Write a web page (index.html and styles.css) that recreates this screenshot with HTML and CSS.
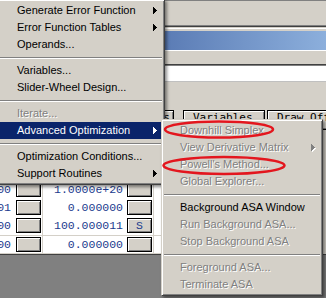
FILE: index.html
```html
<!DOCTYPE html>
<html lang="en">
<head>
    <meta charset="UTF-8">
    <meta name="viewport" content="width=device-width, initial-scale=1.0">
    <title>Advanced Optimization</title>
    <link rel="stylesheet" href="styles.css">
</head>
<body>
<div class="screen">
    <div class="desk">
        <div class="top"></div>
        <div class="edge"></div>
        <div class="rim"></div>
        <div class="caption"></div>
        <div class="menubar"></div>
        <div class="field"></div>
        <div class="gap"></div>
        <div class="tabs">
            <span class="tab cut">Plots</span>
            <span class="tab var">Variables</span>
            <span class="tab draw">Draw Offsets</span>
        </div>
        <div class="spacer"></div>
        <div class="grid">
            <div class="row"><span class="lead">00</span><span class="cbtn"></span><span class="val">1.0000e+20</span><span class="cbtn"></span><span class="tail"></span></div>
            <div class="row"><span class="lead">01</span><span class="cbtn"></span><span class="val">0.000000</span><span class="cbtn"></span><span class="tail"></span></div>
            <div class="row"><span class="lead">00</span><span class="cbtn"></span><span class="val">100.000011</span><span class="cbtn">S</span><span class="tail"></span></div>
            <div class="row ruled"><span class="lead">00</span><span class="cbtn"></span><span class="val">0.000000</span><span class="cbtn"></span><span class="tail"></span></div>
        </div>
        <div class="workspace"></div>
    </div>

    <div class="menu main">
        <div class="item">Generate Error Function<svg class="arrow" width="4" height="7"><path d="M0 0h1v7H0zM1 1h1v5H1zM2 2h1v3H2zM3 3h1v1H3z"/></svg></div>
        <div class="item">Error Function Tables<svg class="arrow" width="4" height="7"><path d="M0 0h1v7H0zM1 1h1v5H1zM2 2h1v3H2zM3 3h1v1H3z"/></svg></div>
        <div class="item">Operands...</div>
        <div class="sep"></div>
        <div class="item">Variables...</div>
        <div class="item">Slider-Wheel Design...</div>
        <div class="sep"></div>
        <div class="item off">Iterate...</div>
        <div class="item on">Advanced Optimization<svg class="arrow" width="4" height="7"><path d="M0 0h1v7H0zM1 1h1v5H1zM2 2h1v3H2zM3 3h1v1H3z"/></svg></div>
        <div class="sep"></div>
        <div class="item">Optimization Conditions...</div>
        <div class="item">Support Routines<svg class="arrow" width="4" height="7"><path d="M0 0h1v7H0zM1 1h1v5H1zM2 2h1v3H2zM3 3h1v1H3z"/></svg></div>
    </div>

    <div class="menu sub">
        <div class="item off">Downhill Simplex</div>
        <div class="item off">View Derivative Matrix<svg class="arrow dim" width="5" height="8"><path class="lit" d="M1 1h1v7H1zM2 2h1v5H2zM3 3h1v3H3zM4 4h1v1H4z"/><path d="M0 0h1v7H0zM1 1h1v5H1zM2 2h1v3H2zM3 3h1v1H3z"/></svg></div>
        <div class="item off">Powell's Method...</div>
        <div class="item off">Global Explorer...</div>
        <div class="sep"></div>
        <div class="item">Background ASA Window</div>
        <div class="item off">Run Background ASA...</div>
        <div class="item off">Stop Background ASA</div>
        <div class="sep"></div>
        <div class="item off">Foreground ASA...</div>
        <div class="item off">Terminate ASA</div>
    </div>

    <svg class="marks" width="326" height="298">
        <ellipse cx="219" cy="129.5" rx="54" ry="8" />
        <ellipse cx="224" cy="165.5" rx="60.5" ry="8.5" />
    </svg>
</div>
</body>
</html>
```

FILE: styles.css
```css
body{
    margin: 0;
    background-color: #808080;
    font-family: "Liberation Sans", Arial, sans-serif;
}
.screen{
    position: relative;
    width: 326px;
    height: 298px;
    overflow: hidden;
}

/* window behind the menus */
.desk{
    display: flex;
    flex-direction: column;
    height: 298px;
}
.top{
    height: 24px;
    border-top: 1px solid #808080;
    background-color: #d4d0c8;
}
.edge{
    height: 0;
    border-top: 1px solid #808080;
    border-bottom: 1px solid #404040;
}
.rim{
    height: 4px;
    background: linear-gradient(#d4d0c8 0 1px, #fff 1px 2px, #d4d0c8 2px);
}
.caption{
    height: 19px;
    background: linear-gradient(90deg, #0a246a 0, #5b7cb5 166px, #8cafdc 326px);
}
.menubar{
    height: 13px;
    border-top: 1px solid #fff;
    background-color: #d4d0c8;
}
.field{
    height: 16px;
    background-color: #fff;
    border-top: 1px solid #404040;
    border-bottom: 1px solid #c0c0c0;
    box-shadow: inset 0 1px #808080;
}
.gap{
    height: 28px;
    background-color: #d4d0c8;
}
.tabs{
    display: flex;
    height: 20px;
    background-color: #d4d0c8;
}
.tab{
    flex: none;
    box-sizing: border-box;
    height: 20px;
    border: 1px solid #000;
    box-shadow: inset 1px 1px #fff, inset -1px -1px #808080;
    background-color: #d4d0c8;
    font-family: "DejaVu Sans Mono", monospace;
    font-size: 11px;
    line-height: 14px;
    padding-left: 9px;
    white-space: nowrap;
    color: #000;
}
.cut{
    margin-left: 130px;
    width: 44px;
    padding: 0 3px 0 0;
    text-align: right;
}
.var{
    margin-left: 9px;
    width: 82px;
}
.draw{
    margin-left: 2px;
    width: 80px;
}
.spacer{
    height: 51px;
    background-color: #d4d0c8;
}

/* value table */
.grid{
    background-color: #d4d0c8;
    border-bottom: 1px solid #d4d0c8;
    font-family: "Liberation Mono", monospace;
    font-size: 11.5px;
    color: #1b3a8e;
}
.row{
    display: flex;
    align-items: flex-start;
    box-sizing: border-box;
    width: 161px;
    height: 18px;
    line-height: 18px;
    background-color: #fff;
}
.ruled{
    border-top: 1px solid #d4d0c8;
    line-height: 17px;
}
.lead{
    display: flex;
    justify-content: flex-end;
    width: 11px;
    margin-right: 5px;
}
.cbtn{
    flex: none;
    box-sizing: border-box;
    width: 25px;
    height: 15px;
    margin-top: 1px;
    border: 1px solid #000;
    background-color: #d4d0c8;
    box-shadow: inset 1px 1px #fff, inset -1px -1px #808080;
    text-align: center;
    line-height: 13px;
}
.val{
    flex: none;
    box-sizing: border-box;
    width: 85px;
    height: 18px;
    margin-left: 1px;
    border-left: 1px solid #d4d0c8;
    padding-right: 4px;
    text-align: right;
}
.tail{
    flex: 1;
    height: 18px;
    margin-left: 1px;
    border-left: 1px solid #d4d0c8;
}
.workspace{
    flex: 1;
    border-top: 1px solid #404040;
    background-color: #808080;
}

/* popup menus */
.menu{
    position: absolute;
    box-sizing: border-box;
    padding: 2px;
    background-color: #d4d0c8;
    border: 1px solid;
    border-color: #d4d0c8 #404040 #404040 #d4d0c8;
    box-shadow: inset 1px 1px #fff, inset -1px -1px #808080, 2px 2px 3px rgba(0, 0, 0, 0.45);
    font-size: 11px;
}
.main{
    left: -3px;
    top: -1px;
    width: 168px;
}
.sub{
    left: 161px;
    top: 119px;
    width: 162px;
}
.item{
    position: relative;
    height: 17px;
    line-height: 17px;
    padding-left: 17px;
    white-space: nowrap;
    color: #000;
}
.sub .item{
    padding-left: 16px;
}
.off{
    color: #808080;
    text-shadow: 1px 1px 0 #fff;
}
.on{
    background-color: #0a246a;
    color: #fff;
}
.arrow{
    position: absolute;
    right: 5px;
    top: 5px;
    fill: currentColor;
}
.on .arrow{
    fill: #fff;
}
.arrow.dim{
    right: 4px;
    fill: #808080;
}
.arrow .lit{
    fill: #fff;
}
.sep{
    box-sizing: border-box;
    height: 9px;
    padding-top: 4px;
}
.sep::before{
    content: "";
    display: block;
    border-top: 1px solid #808080;
    border-bottom: 1px solid #fff;
}

/* red marks drawn over the screenshot */
.marks{
    position: absolute;
    left: 0;
    top: 0;
    pointer-events: none;
}
.marks ellipse{
    fill: none;
    stroke: #e3161e;
    stroke-width: 2.5;
}
```
